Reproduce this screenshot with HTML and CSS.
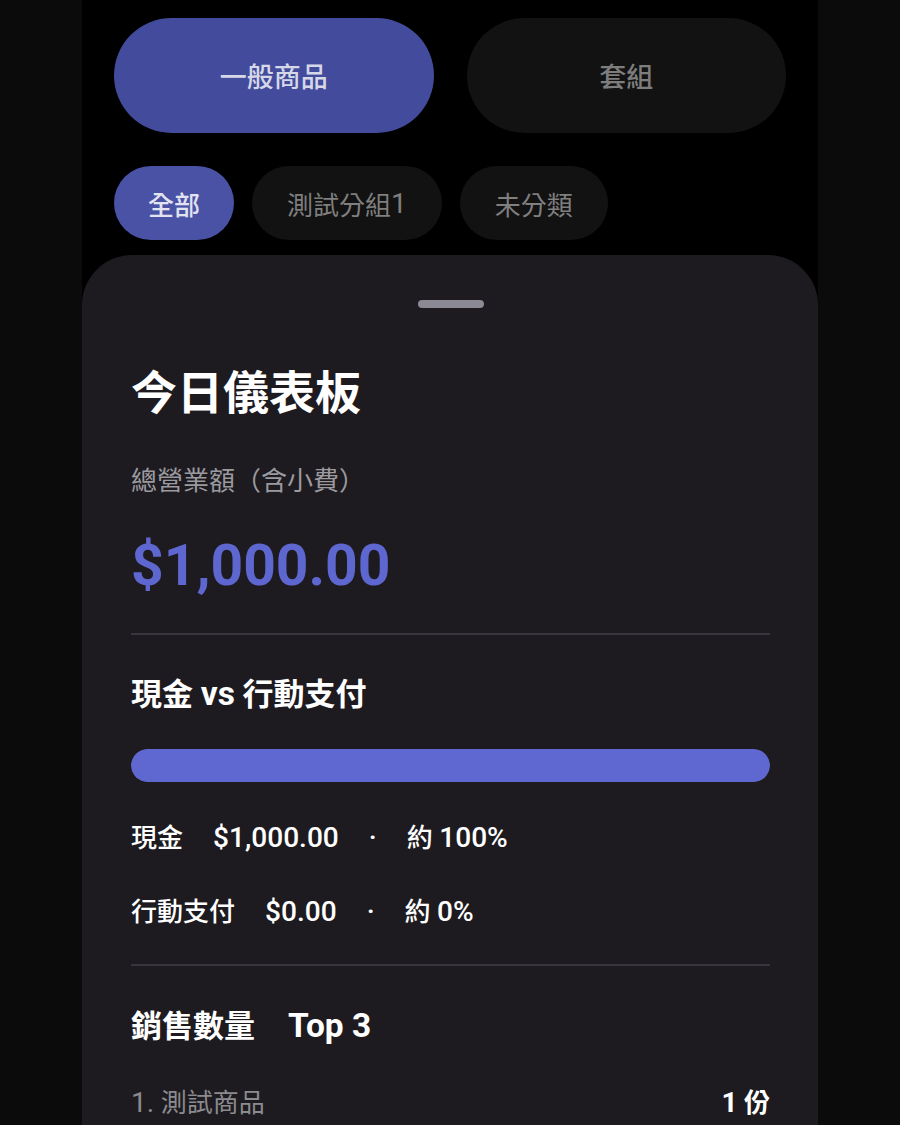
FILE: index.html
```html
<!DOCTYPE html>
<html lang="zh-Hant">
<head>
    <meta charset="UTF-8">
    <meta name="viewport" content="width=device-width, initial-scale=1.0">
    <title>今日儀表板</title>
    <link rel="stylesheet" href="styles.css">
</head>
<body>
    <div class="app">
        <!-- Product type tabs -->
        <div class="type-tabs">
            <div class="type-tab active">一般商品</div>
            <div class="type-tab">套組</div>
        </div>

        <!-- Category chips -->
        <div class="chips">
            <div class="chip active">全部</div>
            <div class="chip">測試分組<span class="num">1</span></div>
            <div class="chip">未分類</div>
        </div>

        <!-- Dashboard sheet -->
        <div class="sheet">
            <div class="handle"></div>
            <h1 class="sheet-title">今日儀表板</h1>
            <div class="total-label">總營業額（含小費）</div>
            <div class="total-amount">$1,000.00</div>

            <div class="divider"></div>

            <h2 class="section-title">現金 <span class="num">vs</span> 行動支付</h2>
            <div class="ratio-bar">
                <div class="ratio-fill" style="width: 100%"></div>
            </div>
            <div class="pay-row">
                <span>現金</span>
                <span class="num">$1,000.00</span>
                <span class="num">·</span>
                <span>約 <span class="num">100%</span></span>
            </div>
            <div class="pay-row second">
                <span>行動支付</span>
                <span class="num">$0.00</span>
                <span class="num">·</span>
                <span>約 <span class="num">0%</span></span>
            </div>

            <div class="divider lower"></div>

            <h2 class="section-title top">銷售數量<span class="top-tag num">Top 3</span></h2>
            <div class="rank-row">
                <span class="rank-name"><span class="num">1.</span> 測試商品</span>
                <span class="rank-qty"><span class="num">1</span> 份</span>
            </div>
        </div>
    </div>
</body>
</html>
```
FILE: styles.css
```css
/* General */
body {
    margin: 0;
    background: #0b0b0b;
    font-family: "Roboto", "Noto Sans CJK TC", sans-serif;
    color: #ffffff;
    height: 100vh;
    overflow: hidden;
}

.app {
    width: 736px;
    margin: 0 auto;
    background: #000000;
    min-height: 100vh;
}

/* latin runs sit a little larger than the CJK glyphs */
.num {
    font-size: 1.08em;
}

/* Type tabs */
.type-tabs {
    display: grid;
    grid-template-columns: 1fr 1fr;
    gap: 33px;
    padding: 18px 32px 0;
}

.type-tab {
    height: 115px;
    border-radius: 58px;
    background: #121212;
    color: #7d7d7d;
    font-size: 27px;
    font-weight: 500;
    display: flex;
    align-items: center;
    justify-content: center;
}

.type-tab.active {
    background: #434c9c;
    color: #d6d8e8;
}

/* Chips */
.chips {
    display: flex;
    gap: 18px;
    padding: 33px 32px 0;
}

.chip {
    height: 74px;
    padding: 0 35px;
    border-radius: 37px;
    background: #121212;
    color: #7f7f7f;
    font-size: 26px;
    display: flex;
    align-items: center;
}

.chip.active {
    padding: 0 34px;
    background: #4a52a6;
    color: #e2e3f0;
    font-weight: 500;
}

/* Sheet */
.sheet {
    margin-top: 15px;
    background: #1d1b20;
    border-radius: 50px 50px 0 0;
    padding: 45px 48px 40px 49px;
}

.handle {
    width: 66px;
    height: 8px;
    border-radius: 4px;
    background: #8a8994;
    margin: 0 auto;
}

.sheet-title {
    margin: 58px 0 0;
    font-size: 46px;
    line-height: 54px;
    font-weight: 700;
}

.total-label {
    margin-top: 46px;
    font-size: 26px;
    line-height: 30px;
    color: #9b9a9f;
}

.total-amount {
    margin-top: 38px;
    font-size: 57px;
    line-height: 64px;
    font-weight: 700;
    color: #5e66cf;
}

.divider {
    margin-top: 35px;
    height: 2px;
    background: #38363c;
}

.divider.lower {
    margin-top: 36px;
}

.section-title {
    margin: 41px 0 0;
    font-size: 31px;
    line-height: 36px;
    font-weight: 700;
}

.section-title.top {
    line-height: 37px;
}

.top-tag {
    margin-left: 33px;
}

/* Ratio bar */
.ratio-bar {
    margin-top: 36px;
    height: 33px;
    border-radius: 17px;
    background: #2c2a31;
    overflow: hidden;
}

.ratio-fill {
    height: 100%;
    background: #5f67d1;
    border-radius: 17px;
}

.pay-row {
    margin-top: 40px;
    display: flex;
    gap: 30px;
    font-size: 26px;
    line-height: 32px;
    font-weight: 500;
}

.pay-row.second {
    margin-top: 42px;
}

/* Ranking */
.rank-row {
    margin-top: 42px;
    display: flex;
    justify-content: space-between;
    font-size: 26px;
    line-height: 32px;
}

.rank-name {
    color: #8b8a8f;
}

.rank-qty {
    font-weight: 700;
}
```
